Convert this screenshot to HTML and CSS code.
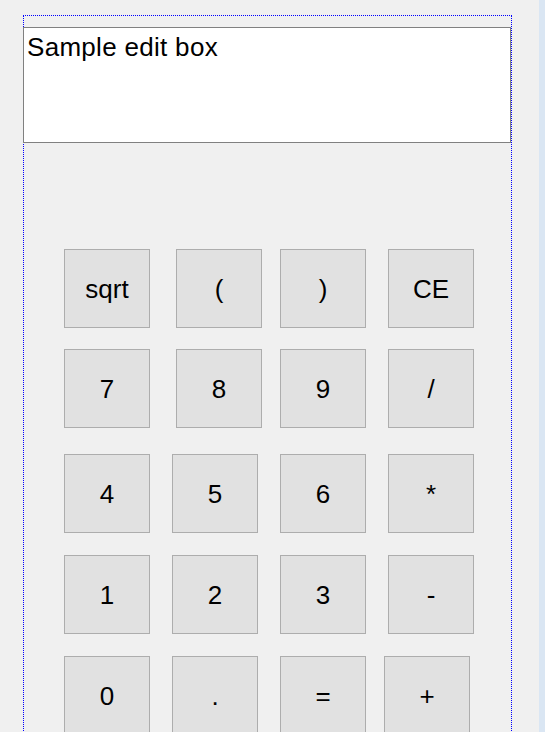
FILE: index.html
```html
<!DOCTYPE html>
<html lang="en">
<head>
    <meta charset="UTF-8">
    <meta name="viewport" content="width=device-width, initial-scale=1.0">
    <title>Calculator</title>
    <link rel="stylesheet" href="styles.css">
</head>
<body>
    <div class="form-area">
        <div class="form-frame">
            <textarea class="edit-box" spellcheck="false">Sample edit box</textarea>
            <div class="keypad">
                <div class="key-row row-1">
                    <button class="key">sqrt</button>
                    <button class="key shift-right">(</button>
                    <button class="key shift-left">)</button>
                    <button class="key">CE</button>
                </div>
                <div class="key-row row-2">
                    <button class="key">7</button>
                    <button class="key shift-right">8</button>
                    <button class="key shift-left">9</button>
                    <button class="key">/</button>
                </div>
                <div class="key-row row-3">
                    <button class="key">4</button>
                    <button class="key">5</button>
                    <button class="key">6</button>
                    <button class="key">*</button>
                </div>
                <div class="key-row row-4">
                    <button class="key">1</button>
                    <button class="key">2</button>
                    <button class="key">3</button>
                    <button class="key">-</button>
                </div>
                <div class="key-row row-5">
                    <button class="key">0</button>
                    <button class="key">.</button>
                    <button class="key">=</button>
                    <button class="key shift-left">+</button>
                </div>
            </div>
        </div>
    </div>
    <div class="side-strip"></div>
</body>
</html>
```

FILE: styles.css
```css
* {
    margin: 0;
    padding: 0;
    box-sizing: border-box;
}
html, body {
    height: 100%;
    overflow: hidden;
}
body {
    display: flex;
    background: #f0f0f0;
    font-family: 'Liberation Sans', Arial, sans-serif;
    color: #000;
}
.form-area {
    flex: 1;
    padding: 15px 0 0 23px;
}
.form-frame {
    width: 489px;
    height: 800px;
    border: 1px dotted #0000ff;
    border-bottom: none;
}
.edit-box {
    display: block;
    width: 488px;
    height: 116px;
    margin: 11px 0 0 -1px;
    padding: 4px 3px;
    border: 1px solid #808080;
    background: #fff;
    font-family: inherit;
    font-size: 26px;
    letter-spacing: 0.3px;
    color: #000;
    resize: none;
    overflow: hidden;
    outline: none;
}
.keypad {
    padding-left: 40px;
}
.key-row {
    display: flex;
    gap: 22px;
}
.row-1 { margin-top: 106px; }
.row-2 { margin-top: 21px; }
.row-3 { margin-top: 26px; }
.row-4 { margin-top: 22px; }
.row-5 { margin-top: 22px; }
.key {
    width: 86px;
    height: 79px;
    padding-top: 2px;
    border: 1px solid #adadad;
    background: #e1e1e1;
    font-family: inherit;
    font-size: 26px;
    color: #000;
    flex-shrink: 0;
}
.shift-right { margin-left: 4px; }
.shift-left { margin-left: -4px; }
.side-strip {
    width: 6px;
    background: #dae6f3;
}
```
